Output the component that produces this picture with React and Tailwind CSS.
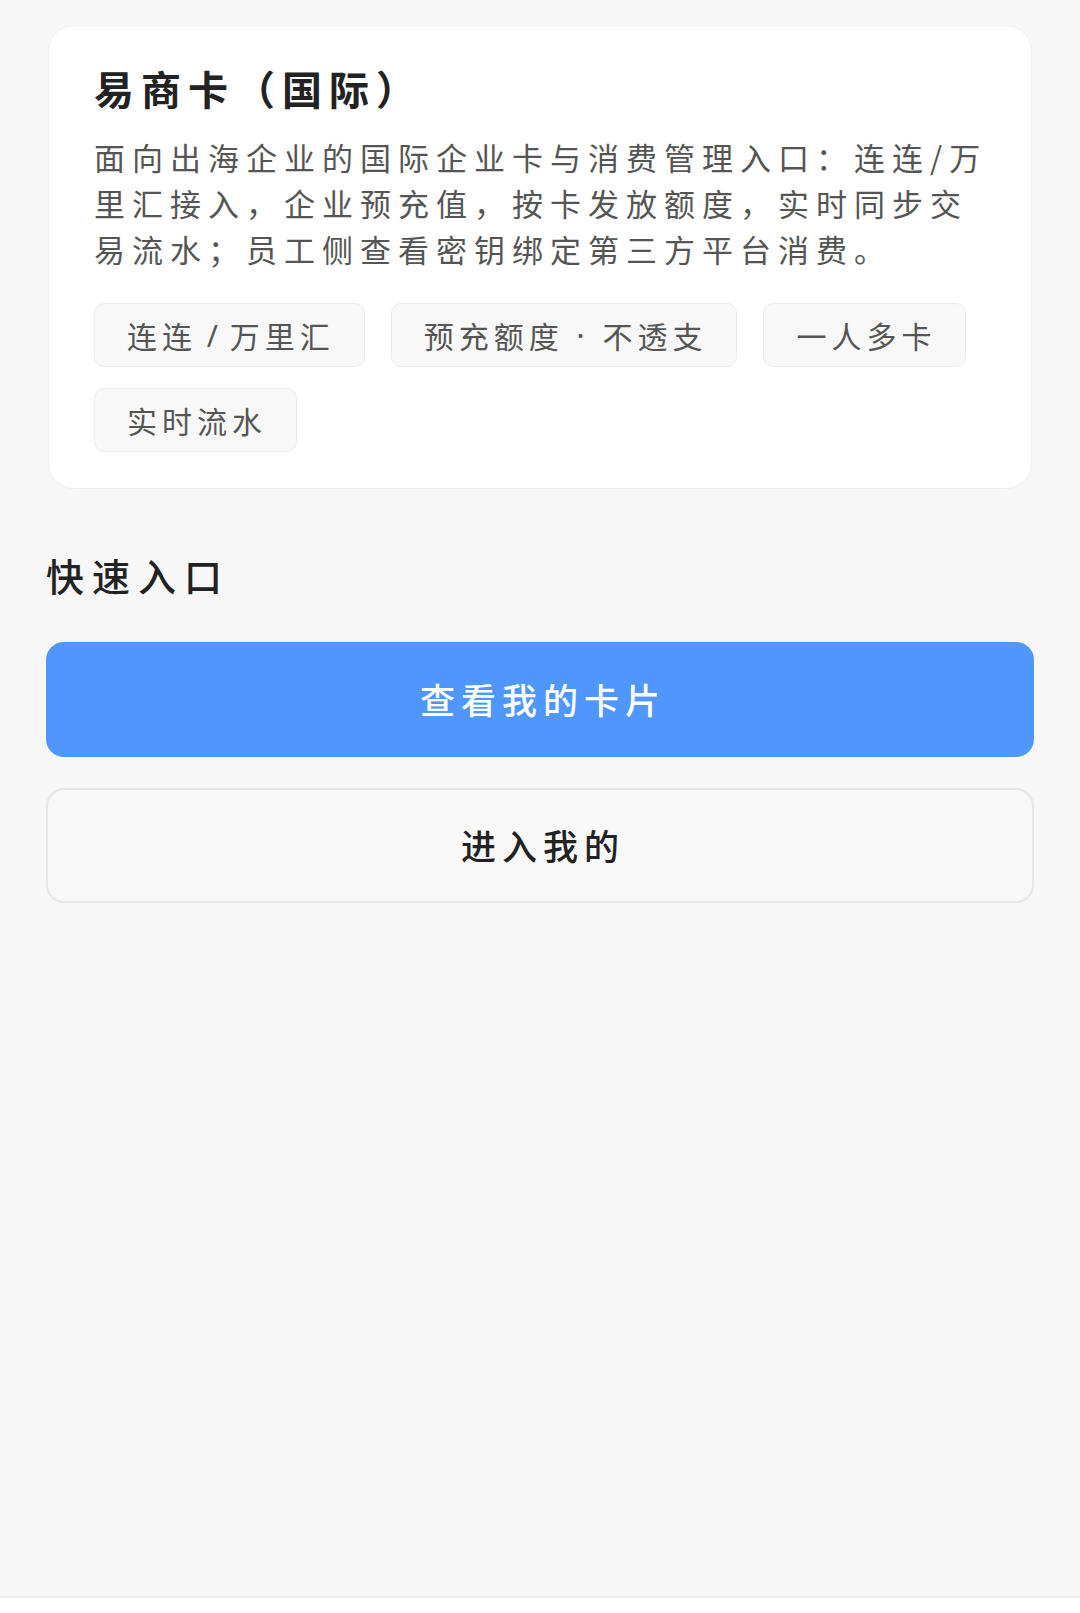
import React from 'react';

const tags = [
  ['连连', ' / ', '万里汇', 'tracking-[2px]'],
  ['预充额度', ' · ', '不透支', 'tracking-[5px]'],
  ['一人多卡'],
  ['实时流水'],
];

export default function App() {
  return (
    <div
      className="min-h-[1613px] bg-[#f7f7f7] flex flex-col"
      style={{ fontFamily: '"Noto Sans CJK SC", "Noto Sans", sans-serif' }}
    >
      <div className="flex-1 px-[46px] pt-[25px]">
        {/* Product card */}
        <section className="mx-[2px] bg-white rounded-[26px] border border-[#eeeeee] pl-[45px] pr-[34px] pt-[36px] pb-[36px]">
          <h1 className="text-[40px] leading-[52px] font-bold tracking-[7px] text-[#222222]">
            易商卡（国际）
          </h1>
          <p className="mt-[20px] text-[31px] leading-[46px] tracking-[7px] text-[#555555]">
            面向出海企业的国际企业卡与消费管理入口：连连/万里汇接入，企业预充值，按卡发放额度，实时同步交易流水；员工侧查看密钥绑定第三方平台消费。
          </p>
          <div className="mt-[31px] flex flex-wrap gap-x-[26px] gap-y-[21px]">
            {tags.map((t) => (
              <span
                key={t.join('')}
                className="h-[64px] flex items-center pl-[32px] pr-[29px] rounded-[10px] bg-[#f8f8f8] border border-[#ececec] text-[30px] tracking-[5px] text-[#555555] whitespace-pre"
              >
                {t[0]}
                {t[1] && (
                  <span className={t[3]} style={{ fontFamily: '"Noto Sans", sans-serif' }}>
                    {t[1]}
                  </span>
                )}
                {t[2]}
              </span>
            ))}
          </div>
        </section>

        {/* Quick entry */}
        <h2 className="mt-[61px] text-[38px] leading-[50px] font-medium tracking-[8px] text-[#222222]">
          快速入口
        </h2>
        <div className="mt-[42px] flex flex-col gap-[31px]">
          <button className="h-[115px] rounded-[18px] bg-[#4f97fd] text-white text-[35px] font-medium tracking-[6px] pl-[6px]">
            查看我的卡片
          </button>
          <button className="h-[115px] rounded-[18px] bg-[#f8f8f8] border-2 border-[#e6e6e6] text-[#222222] text-[35px] font-medium tracking-[6px] pl-[6px]">
            进入我的
          </button>
        </div>
      </div>
      <div className="h-[17px] bg-white border-t-2 border-[#ededed]" />
    </div>
  );
}
